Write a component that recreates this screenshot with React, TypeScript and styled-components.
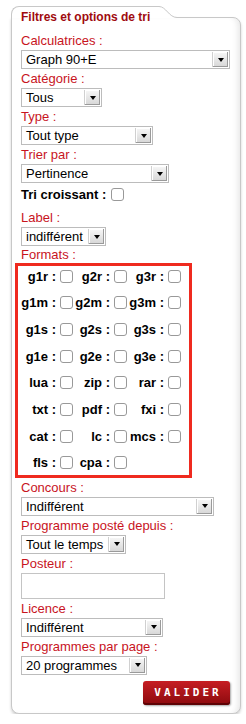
import React from 'react';
import styled, { createGlobalStyle } from 'styled-components';

const GlobalStyle = createGlobalStyle`
  html, body {
    margin: 0;
    padding: 0;
    background: #fff;
  }
  body {
    font-family: "Liberation Sans", Arial, sans-serif;
  }
`;

const Panel = styled.form`
  position: relative;
  box-sizing: border-box;
  width: 230px;
  margin: 17px 0 0 11px;
  padding: 0 10px 8px 9px;
  background: #fff;
  border: 1px solid #c8c8c8;
  border-radius: 0 8px 8px 8px;
  box-shadow: 0 2px 3px rgba(0, 0, 0, 0.18), inset -6px 0 6px -4px rgba(0, 0, 0, 0.1);

  /* the raised tab holding the title */
  &::before {
    content: '';
    position: absolute;
    top: -12px;
    left: -1px;
    width: 148px;
    height: 11px;
    background: #fff;
    border-top: 1px solid #c8c8c8;
    border-left: 1px solid #c8c8c8;
    border-top-left-radius: 8px;
  }
`;

const TabShoulder = styled.svg`
  position: absolute;
  top: -12px;
  left: 147px;
  width: 20px;
  height: 12px;
`;

const Title = styled.div`
  position: relative;
  z-index: 1;
  margin: -8px 0 7px;
  font-size: 12px;
  line-height: 14px;
  font-weight: bold;
  color: #a00b0f;
`;

const FieldLabel = styled.div<{ $h?: number }>`
  height: ${p => p.$h ?? 19}px;
  line-height: ${p => p.$h ?? 19}px;
  font-size: 13px;
  color: #c8141e;
  white-space: nowrap;
`;

const Select = styled.div<{ $w: number }>`
  box-sizing: border-box;
  display: flex;
  align-items: center;
  width: ${p => p.$w}px;
  height: 19px;
  border: 1px solid #bcbcbc;
  background: #fff;
  font-size: 13px;
  color: #000;
`;

const SelectValue = styled.span`
  flex: 1;
  padding-left: 4px;
  line-height: 17px;
  white-space: nowrap;
  overflow: hidden;
`;

const SelectArrow = styled.span`
  display: flex;
  align-items: center;
  justify-content: center;
  width: 15px;
  height: 15px;
  margin-right: 1px;
  background: linear-gradient(#f7f7f7, #d6d6d6);
  box-shadow: inset -1px -1px 0 #9a9a9a, inset 1px 1px 0 #fff;
  border-left: 1px solid #d0d0d0;

  &::after {
    content: '';
    border-left: 3.5px solid transparent;
    border-right: 3.5px solid transparent;
    border-top: 4px solid #000;
  }
`;

const CheckRow = styled.label`
  display: flex;
  align-items: center;
  height: 22px;
  margin-bottom: 3px;
  font-size: 13px;
  font-weight: bold;
  color: #000;
`;

const Checkbox = styled.input.attrs({ type: 'checkbox' })<{ $gap?: number }>`
  appearance: none;
  box-sizing: border-box;
  width: 13px;
  height: 13px;
  margin: 0 0 0 ${p => p.$gap ?? 5}px;
  border: 1px solid #999;
  border-radius: 3px;
  background: #fff;
`;

const FormatsBox = styled.div`
  box-sizing: border-box;
  display: grid;
  grid-template-columns: repeat(3, 54px);
  grid-auto-rows: 20px;
  row-gap: 6.7px;
  width: 177px;
  margin-left: -6px;
  padding: 0 8px 2px 1px;
  border: 3px solid #ef2a1f;
`;

const FormatCell = styled.label`
  display: flex;
  align-items: center;
  justify-content: flex-end;
  font-size: 13px;
  font-weight: bold;
  color: #000;
  white-space: nowrap;
`;

const TextInput = styled.input`
  display: block;
  box-sizing: border-box;
  width: 144px;
  height: 26px;
  margin: 0;
  border: 1px solid #c4c4c4;
  background: #fff;
`;

const Actions = styled.div`
  display: flex;
  justify-content: flex-end;
  margin-top: 6px;
`;

const SubmitButton = styled.button`
  width: 87px;
  height: 24px;
  padding: 0 0 0 3px;
  border: none;
  border-radius: 3px;
  background: linear-gradient(#c61d23, #8c0a0e);
  box-shadow: inset 0 -2px 0 #5e0306, 1px 1px 2px rgba(0, 0, 0, 0.35);
  color: #fff;
  font-family: "DejaVu Sans Mono", "Liberation Mono", monospace;
  font-size: 11px;
  font-weight: bold;
  letter-spacing: 3px;
  cursor: pointer;
`;

const formats = [
  'g1r', 'g2r', 'g3r',
  'g1m', 'g2m', 'g3m',
  'g1s', 'g2s', 'g3s',
  'g1e', 'g2e', 'g3e',
  'lua', 'zip', 'rar',
  'txt', 'pdf', 'fxi',
  'cat', 'lc', 'mcs',
  'fls', 'cpa',
];

const Dropdown = ({ value, width }: { value: string; width: number }) => (
  <Select $w={width}>
    <SelectValue>{value}</SelectValue>
    <SelectArrow />
  </Select>
);

export default function App() {
  return (
    <>
      <GlobalStyle />
      <Panel onSubmit={e => e.preventDefault()}>
        <TabShoulder viewBox="0 0 20 12">
          <path d="M0 0.5 C7 0.5 10 11.5 18 11.5 H20 V12 H0 Z" fill="#fff" />
          <path d="M0 0.5 C7 0.5 10 11.5 18 11.5 H20" fill="none" stroke="#c8c8c8" strokeWidth="1" />
        </TabShoulder>
        <Title>Filtres et options de tri</Title>

        <FieldLabel>Calculatrices :</FieldLabel>
        <Dropdown value="Graph 90+E" width={209} />
        <FieldLabel>Catégorie :</FieldLabel>
        <Dropdown value="Tous" width={81} />
        <FieldLabel>Type :</FieldLabel>
        <Dropdown value="Tout type" width={132} />
        <FieldLabel>Trier par :</FieldLabel>
        <Dropdown value="Pertinence" width={148} />

        <CheckRow>
          Tri croissant :<Checkbox />
        </CheckRow>

        <FieldLabel>Label :</FieldLabel>
        <Dropdown value="indifférent" width={85} />

        <FieldLabel $h={17}>Formats :</FieldLabel>
        <FormatsBox>
          {formats.map(f => (
            <FormatCell key={f}>
              {f} :<Checkbox $gap={4} />
            </FormatCell>
          ))}
        </FormatsBox>

        <FieldLabel>Concours :</FieldLabel>
        <Dropdown value="Indifférent" width={193} />
        <FieldLabel>Programme posté depuis :</FieldLabel>
        <Dropdown value="Tout le temps" width={105} />
        <FieldLabel>Posteur :</FieldLabel>
        <TextInput type="text" />
        <FieldLabel>Licence :</FieldLabel>
        <Dropdown value="Indifférent" width={142} />
        <FieldLabel>Programmes par page :</FieldLabel>
        <Dropdown value="20 programmes" width={126} />

        <Actions>
          <SubmitButton type="submit">VALIDER</SubmitButton>
        </Actions>
      </Panel>
    </>
  );
}
